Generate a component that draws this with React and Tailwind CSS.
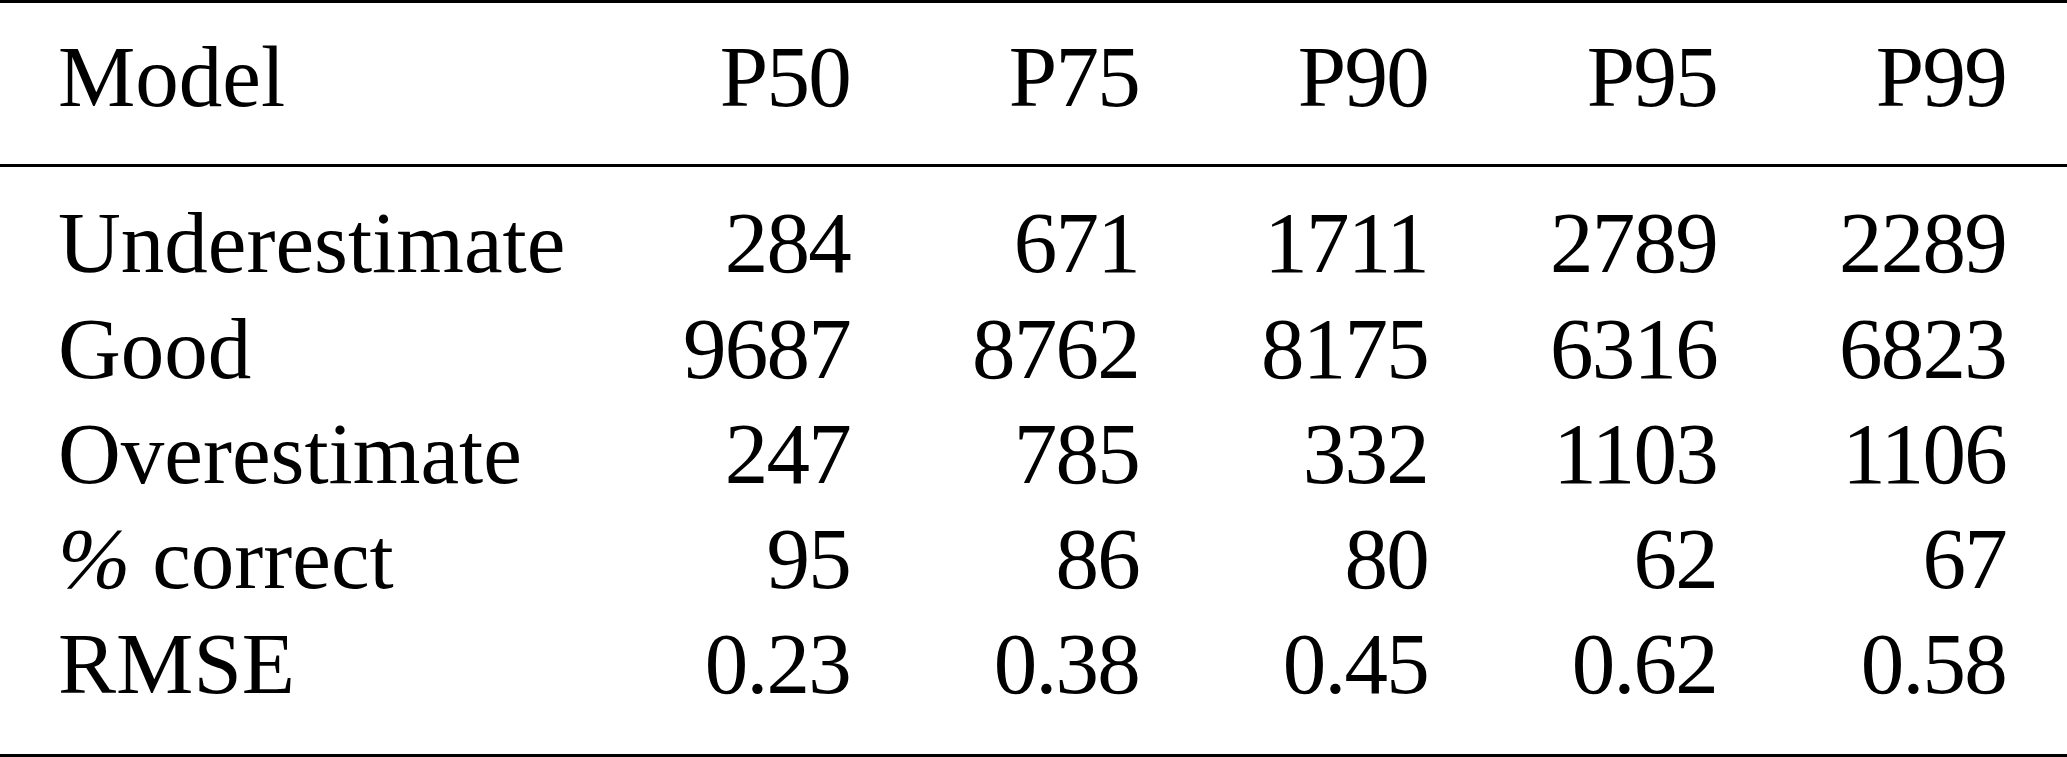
import React from "react";

const headers = ["P50", "P75", "P90", "P95", "P99"];

const rows = [
  ["Underestimate", "284", "671", "1711", "2789", "2289"],
  ["Good", "9687", "8762", "8175", "6316", "6823"],
  ["Overestimate", "247", "785", "332", "1103", "1106"],
  [
    <>
      <span className="italic">%</span> correct
    </>,
    "95",
    "86",
    "80",
    "62",
    "67",
  ],
  ["RMSE", "0.23", "0.38", "0.45", "0.62", "0.58"],
];

function Row({ cells }) {
  return (
    <div className="grid grid-cols-[505px_repeat(5,289px)] leading-[105.25px]">
      {cells.map((c, i) =>
        i === 0 ? (
          <div key={i} className="text-left">
            {c}
          </div>
        ) : (
          <div key={i} className="text-right tracking-[-0.02em] pr-[2px]">
            {c}
          </div>
        )
      )}
    </div>
  );
}

export default function App() {
  return (
    <div className="w-[2067px] h-[757px] bg-white text-black font-['Liberation_Serif','Times_New_Roman',serif] text-[87px] overflow-hidden">
      <div className="border-t-[3px] border-black pt-[21px] pb-[35px] pl-[58px]">
        <Row cells={["Model", ...headers]} />
      </div>
      <div className="border-t-[3px] border-black pt-[23px] pb-[37px] pl-[58px]">
        {rows.map((r, i) => (
          <Row key={i} cells={r} />
        ))}
      </div>
      <div className="border-t-4 border-black" />
    </div>
  );
}
